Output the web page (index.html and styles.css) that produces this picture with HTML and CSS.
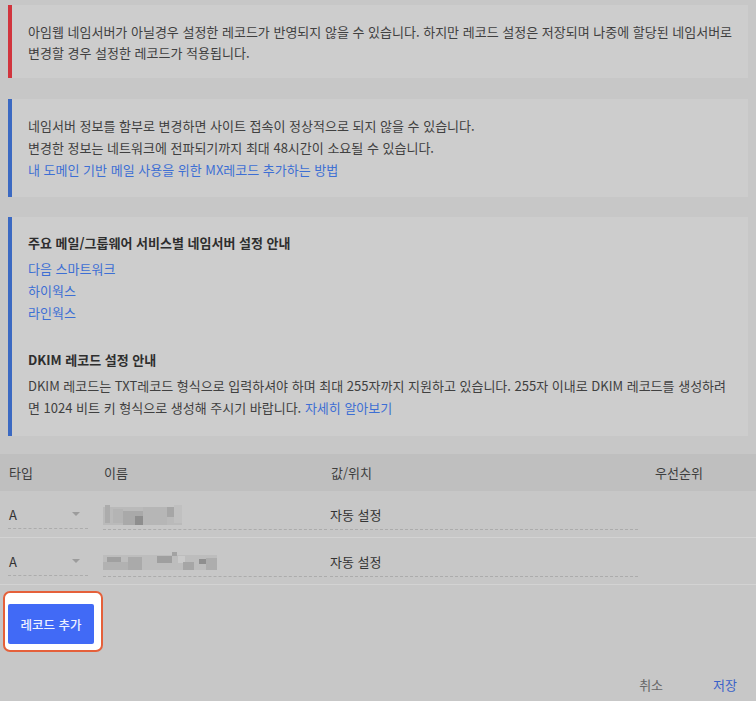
FILE: index.html
```html
<!DOCTYPE html>
<html lang="ko">
<head>
<meta charset="utf-8">
<link rel="stylesheet" href="styles.css">
</head>
<body>
<div class="notices">
  <div class="notice notice-red">
    아임웹 네임서버가 아닐경우 설정한 레코드가 반영되지 않을 수 있습니다. 하지만 레코드 설정은 저장되며 나중에 할당된 네임서버로<br>변경할 경우 설정한 레코드가 적용됩니다.
  </div>
  <div class="notice notice-blue">
    네임서버 정보를 함부로 변경하면 사이트 접속이 정상적으로 되지 않을 수 있습니다.<br>
    변경한 정보는 네트워크에 전파되기까지 최대 48시간이 소요될 수 있습니다.<br>
    <a class="link" href="#">내 도메인 기반 메일 사용을 위한 MX레코드 추가하는 방법</a>
  </div>
  <div class="notice notice-blue notice-guide">
    <div class="section">
      <div class="title">주요 메일/그룹웨어 서비스별 네임서버 설정 안내</div>
      <a class="link block" href="#">다음 스마트워크</a>
      <a class="link block" href="#">하이웍스</a>
      <a class="link block" href="#">라인웍스</a>
    </div>
    <div class="section section-dkim">
      <div class="title">DKIM 레코드 설정 안내</div>
      <div>DKIM 레코드는 TXT레코드 형식으로 입력하셔야 하며 최대 255자까지 지원하고 있습니다. 255자 이내로 DKIM 레코드를 생성하려<br>면 1024 비트 키 형식으로 생성해 주시기 바랍니다. <a class="link" href="#">자세히 알아보기</a></div>
    </div>
  </div>
</div>

<div class="records">
  <div class="grid thead">
    <div>타입</div>
    <div>이름</div>
    <div>값/위치</div>
    <div>우선순위</div>
  </div>
  <div class="grid row">
    <div class="select"><span>A</span><i class="caret"></i></div>
    <div class="field name">
      <svg width="116" height="20" viewBox="0 0 116 20">
        <rect x="0" y="2" width="79" height="18" fill="#bababa"/>
        <rect x="2" y="0" width="5" height="18" fill="#acacac"/>
        <rect x="10" y="4" width="10" height="14" fill="#b4b4b4"/>
        <rect x="20" y="6" width="20" height="14" fill="#a9a9a9"/>
        <rect x="32" y="11" width="8" height="9" fill="#8e8e8e"/>
        <rect x="40" y="2" width="24" height="18" fill="#b6b6b6"/>
        <rect x="64" y="2" width="7" height="10" fill="#a6a6a6"/>
        <rect x="71" y="0" width="8" height="18" fill="#c0c0c0"/>
      </svg>
    </div>
    <div class="field value">자동 설정</div>
    <div></div>
  </div>
  <div class="grid row">
    <div class="select"><span>A</span><i class="caret"></i></div>
    <div class="field name">
      <svg width="116" height="20" viewBox="0 0 116 20">
        <rect x="0" y="3" width="114" height="15" fill="#bdbdbd"/>
        <rect x="4" y="5" width="14" height="5" fill="#a0a0a0"/>
        <rect x="0" y="10" width="26" height="8" fill="#b2b2b2"/>
        <rect x="25" y="5" width="14" height="13" fill="#aaaaaa"/>
        <rect x="54" y="4" width="15" height="7" fill="#9f9f9f"/>
        <rect x="69" y="0" width="5" height="4" fill="#a3a3a3"/>
        <rect x="75" y="4" width="7" height="7" fill="#cacaca"/>
        <rect x="80" y="10" width="11" height="8" fill="#a6a6a6"/>
        <rect x="96" y="7" width="7" height="5" fill="#8f8f8f"/>
        <rect x="103" y="6" width="11" height="12" fill="#adadad"/>
      </svg>
    </div>
    <div class="field value">자동 설정</div>
    <div></div>
  </div>
</div>

<div class="spotlight">
  <button class="btn-primary" type="button">레코드 추가</button>
</div>

<div class="footer">
  <a class="btn-text" href="#">취소</a>
  <a class="btn-text save" href="#">저장</a>
</div>
</body>
</html>
```

FILE: styles.css
```css
html, body {
  margin: 0;
  padding: 0;
}
body {
  background: #c7c7c7;
  font-family: "Noto Sans CJK KR", "Noto Sans", sans-serif;
  font-size: 13px;
  letter-spacing: 0;
  color: #404040;
  width: 756px;
  height: 701px;
  overflow: hidden;
}
a { text-decoration: none; }

.notices {
  padding: 5px 8px 0;
}
.notice {
  background: #cdcdcd;
  border-left: 4px solid #3b69c2;
  padding: 16px 16px 15px 16px;
  line-height: 21px;
  margin-bottom: 20px;
  white-space: nowrap;
}
.notice-red {
  border-left-color: #d1343d;
  margin-bottom: 21px;
}
.notice-blue {
  line-height: 22px;
  padding: 16px 16px 16px 16px;
}
.notice-guide {
  padding: 15px 16px 17px 16px;
  margin-bottom: 18px;
}
.title {
  font-weight: 700;
  color: #2e2e2e;
  margin-bottom: 4px;
}
.section-dkim {
  margin-top: 25px;
}
.link {
  color: #3d6fd4;
}
.block {
  display: block;
}

.grid {
  display: grid;
  grid-template-columns: 95px 227px 324px 1fr;
  padding-left: 8px;
}
.thead {
  background: #bfbfbf;
  height: 37px;
  margin-top: 1px;
  align-items: center;
  color: #3e3e3e;
}
.thead > div { padding-left: 1px; }
.row {
  padding-top: 9px;
  padding-bottom: 7px;
  border-bottom: 1px solid #d3d3d3;
  align-items: start;
}
.select, .field {
  height: 29px;
  border-bottom: 1px dashed #acacac;
  display: flex;
  align-items: center;
  color: #333;
}
.select {
  width: 80px;
  justify-content: space-between;
  padding-left: 1px;
  box-sizing: border-box;
}
.caret {
  display: block;
  width: 0;
  height: 0;
  border-left: 4px solid transparent;
  border-right: 4px solid transparent;
  border-top: 4px solid #9c9c9c;
  margin-right: 8px;
}
.name {
  width: 224px;
}
.name svg { display: block; }
.value {
  width: 308px;
}

.spotlight {
  display: inline-block;
  margin: 6px 0 0 3px;
  background: #ffffff;
  border: 2px solid #e5603a;
  border-radius: 7px;
  padding: 11px 7px 6px 3px;
}
.btn-primary {
  display: block;
  width: 86px;
  height: 40px;
  border: none;
  border-radius: 2px;
  background: #416af6;
  color: #eef1ff;
  font-family: inherit;
  font-size: 12.5px;
  font-weight: 500;
  padding: 0;
}

.footer {
  display: flex;
  justify-content: flex-end;
  gap: 50px;
  padding-right: 19px;
  margin-top: 23px;
  line-height: 20px;
}
.btn-text {
  color: #666;
}
.btn-text.save {
  color: #3a62c9;
}
```
